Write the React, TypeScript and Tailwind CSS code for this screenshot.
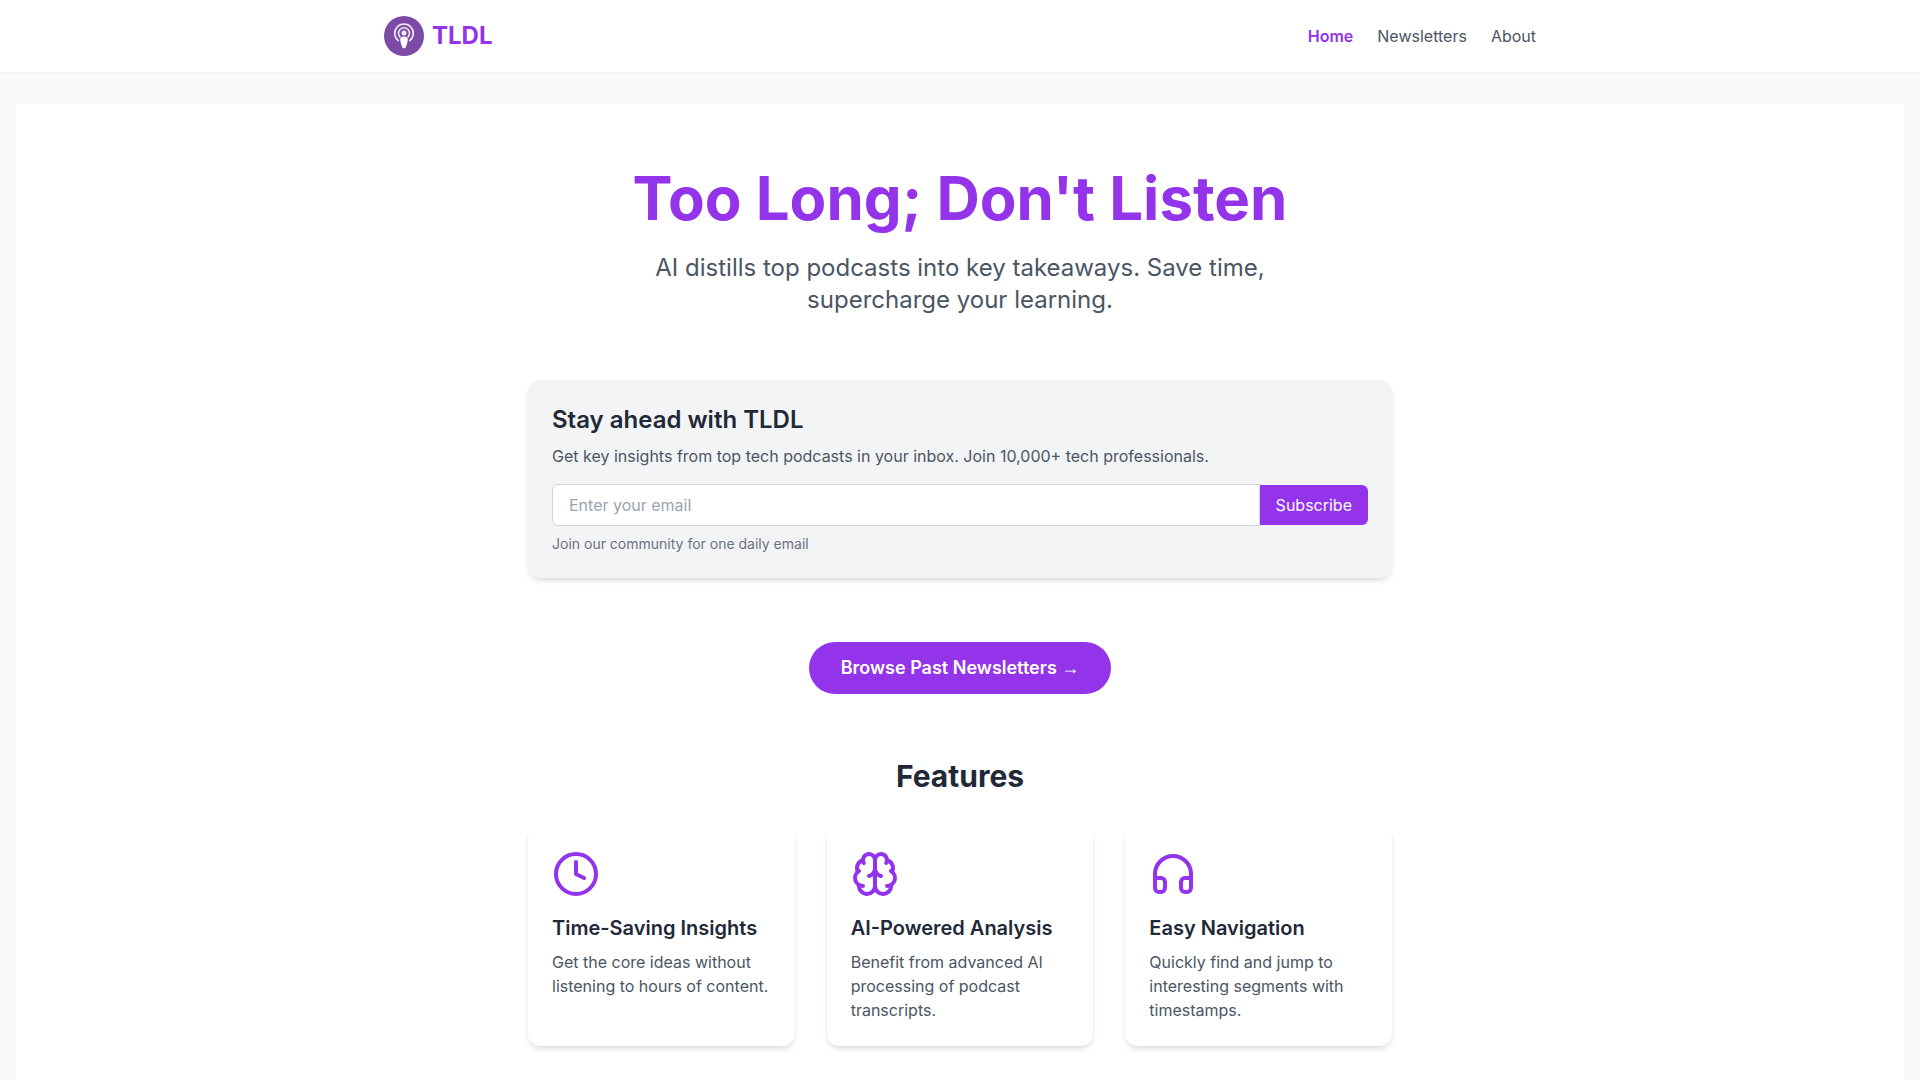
import { useState } from 'react';
import type { FormEvent } from 'react';
import { Brain, Clock, Headphones } from 'lucide-react';

const navLinks = [
  { label: 'Home', href: '#home', active: true },
  { label: 'Newsletters', href: '#newsletters', active: false },
  { label: 'About', href: '#about', active: false },
];

const features = [
  {
    icon: Clock,
    title: 'Time-Saving Insights',
    description: 'Get the core ideas without listening to hours of content.',
  },
  {
    icon: Brain,
    title: 'AI-Powered Analysis',
    description: 'Benefit from advanced AI processing of podcast transcripts.',
  },
  {
    icon: Headphones,
    title: 'Easy Navigation',
    description: 'Quickly find and jump to interesting segments with timestamps.',
  },
];

function Logo() {
  return (
    <svg viewBox="0 0 40 40" className="w-10 h-10" aria-hidden="true">
      <circle cx="20" cy="20" r="20" fill="#7b4ba6" />
      <g fill="none" stroke="#f3e8f8" strokeWidth="1.6" strokeLinecap="round">
        <path d="M14.2 24.6 A9.3 9.3 0 1 1 25.8 24.6" />
        <path d="M15.9 20.9 A5.5 5.5 0 1 1 24.1 20.9" />
      </g>
      <circle cx="20" cy="17" r="2.5" fill="#f3e8f8" />
      <path
        d="M20 20.6c2.500 0 3.800.9 3.800 2.700 0 1.900-.9 5-1.500 6.700-.5 1.500-1.100 2.300-2.300 2.300s-1.800-.8-2.300-2.300c-.6-1.700-1.500-4.800-1.500-6.700 0-1.800 1.300-2.700 3.800-2.700z"
        fill="#fdf8ff"
      />
    </svg>
  );
}

function Header() {
  return (
    <header className="relative bg-white shadow-xs">
      <div className="max-w-6xl mx-auto py-4 flex items-center justify-between">
        <a href="#home" className="flex items-center gap-2 text-2xl font-bold text-[#9333ea]">
          <Logo />
          <span>TLDL</span>
        </a>
        <nav className="flex gap-6">
          {navLinks.map((link) => (
            <a
              key={link.label}
              href={link.href}
              className={link.active ? 'font-semibold text-[#9333ea]' : 'text-[#4b5563] hover:text-[#9333ea]'}
            >
              {link.label}
            </a>
          ))}
        </nav>
      </div>
    </header>
  );
}

function SubscribeCard() {
  const [email, setEmail] = useState('');

  const handleSubmit = (e: FormEvent) => {
    e.preventDefault();
    setEmail('');
  };

  return (
    <section className="bg-[#f3f4f6] rounded-xl shadow-md p-6 mb-16">
      <h2 className="text-2xl font-semibold text-[#1f2937] mb-2">Stay ahead with TLDL</h2>
      <p className="text-[#4b5563] mb-4">
        Get key insights from top tech podcasts in your inbox. Join 10,000+ tech professionals.
      </p>
      <form onSubmit={handleSubmit} className="flex items-center">
        <input
          type="email"
          aria-label="Email address"
          value={email}
          onChange={(e) => setEmail(e.target.value)}
          placeholder="Enter your email"
          className="grow min-w-0 px-4 py-2 bg-white border border-[#d1d5db] rounded-l-md placeholder-[#9ca3af] focus:outline-none focus:border-[#9333ea]"
        />
        <button type="submit" className="px-4 py-2 bg-[#9333ea] text-white rounded-r-md hover:bg-[#7e22ce]">
          Subscribe
        </button>
      </form>
      <p className="text-sm text-[#6b7280] mt-2">Join our community for one daily email</p>
    </section>
  );
}

export default function App() {
  return (
    <div className="min-h-screen bg-[#f9fafb] font-['Inter',sans-serif]">
      <Header />
      <main className="px-4 py-8">
        <div className="bg-white">
          <div className="max-w-4xl mx-auto px-4 py-16">
            <section className="text-center mb-16">
              <h1 className="text-6xl font-bold text-[#9333ea] mb-6">Too Long; Don't Listen</h1>
              <p className="text-2xl text-[#4b5563] max-w-2xl mx-auto">
                AI distills top podcasts into key takeaways. Save time, supercharge your learning.
              </p>
            </section>

            <SubscribeCard />

            <div className="flex justify-center mb-16">
              <a
                href="#newsletters"
                className="px-8 py-3 bg-[#9333ea] text-white text-lg font-semibold rounded-full hover:bg-[#7e22ce]"
              >
                Browse Past Newsletters <span className="font-normal font-['Liberation_Serif',serif]">→</span>
              </a>
            </div>

            <section>
              <h2 className="text-3xl font-bold text-center text-[#1f2937] mb-8">Features</h2>
              <div className="grid grid-cols-1 md:grid-cols-3 gap-8">
                {features.map(({ icon: Icon, title, description }) => (
                  <div key={title} className="bg-white rounded-xl shadow-md p-6">
                    <Icon className="w-12 h-12 text-[#9333ea] mb-4" />
                    <h3 className="text-xl font-semibold text-[#1f2937] mb-2">{title}</h3>
                    <p className="text-[#4b5563]">{description}</p>
                  </div>
                ))}
              </div>
            </section>
          </div>
        </div>
      </main>
    </div>
  );
}
